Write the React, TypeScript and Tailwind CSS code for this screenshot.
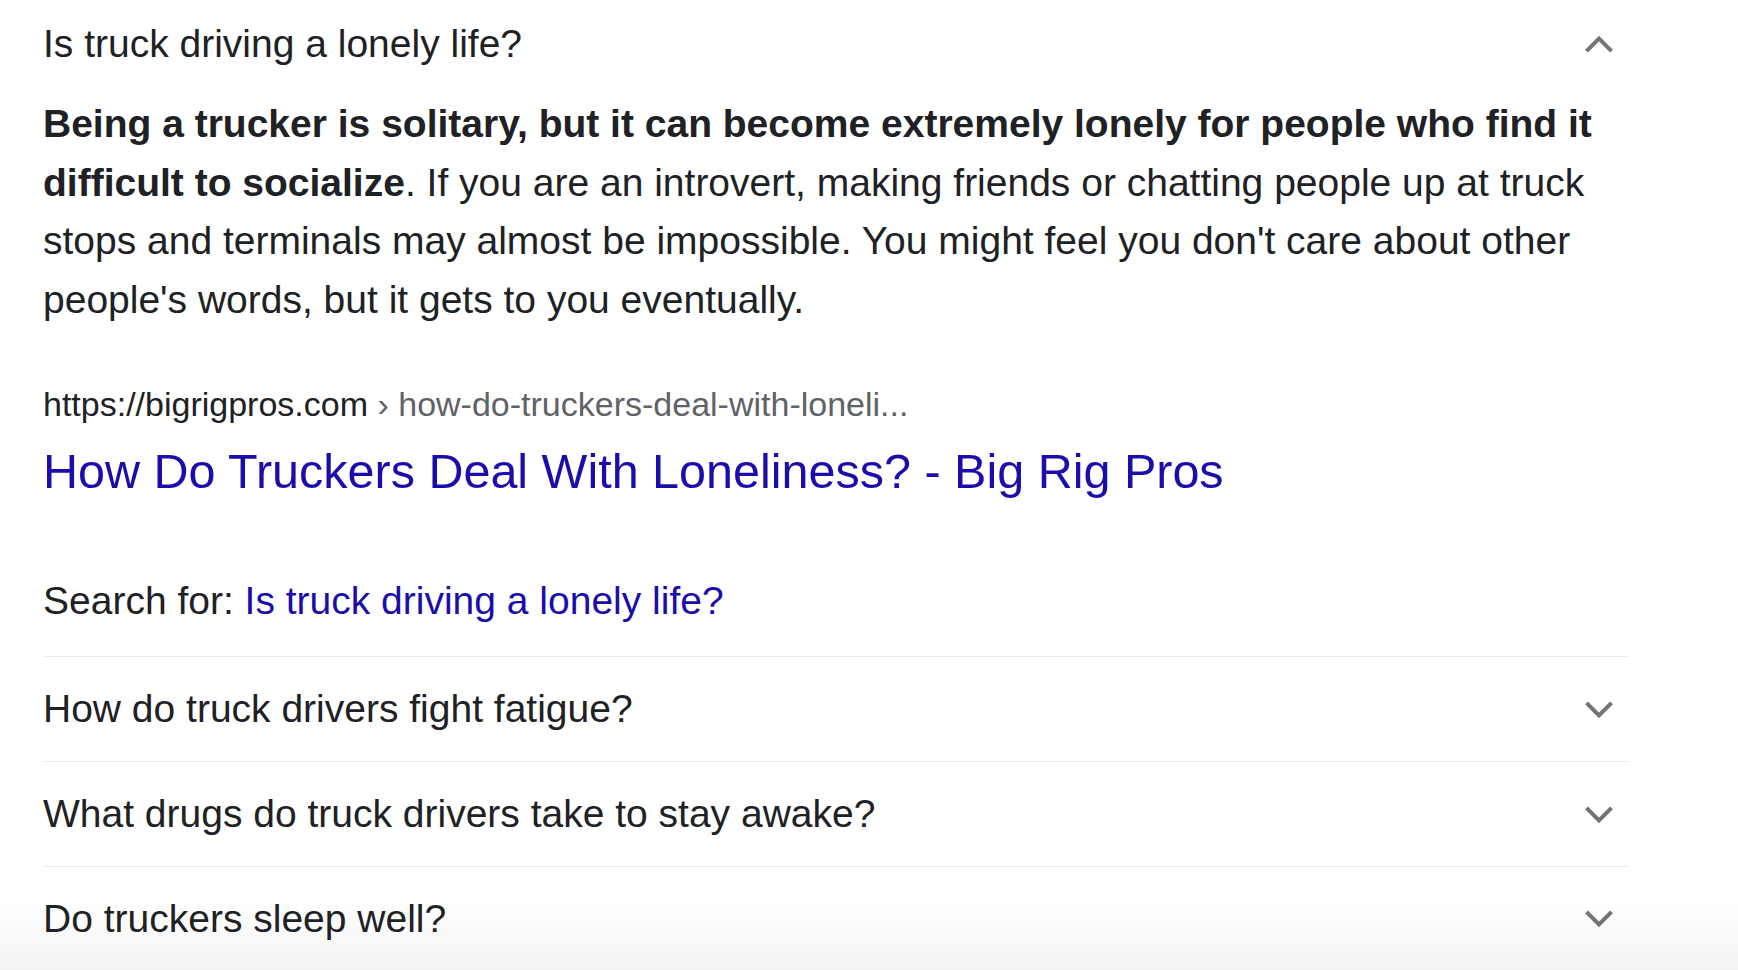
import React from 'react';

const font = { fontFamily: '"Liberation Sans", Arial, Helvetica, sans-serif' };

function Chevron({ up = false }: { up?: boolean }) {
  return (
    <svg width="30" height="19" viewBox="0 0 30 19" className={up ? 'rotate-180' : ''}>
      <path d="M2.5 2.8 L15 15.3 L27.5 2.8" fill="none" stroke="#70757a" strokeWidth="4" />
    </svg>
  );
}

const related = [
  'How do truck drivers fight fatigue?',
  'What drugs do truck drivers take to stay awake?',
  'Do truckers sleep well?',
];

export default function App() {
  return (
    <div
      className="min-h-[970px] bg-[linear-gradient(to_bottom,#ffffff_93%,#f3f3f3)] text-[#202124]"
      style={font}
    >
      <div className="ml-[43px] w-[1586px]">
        {/* expanded question */}
        <div className="flex h-[88px] items-center justify-between pr-[15px]">
          <span className="text-[39px]">Is truck driving a lonely life?</span>
          <Chevron up />
        </div>

        <p className="mt-[7px] text-[39px] leading-[58.6px]">
          <b>
            Being a trucker is solitary, but it can become extremely lonely for people who find it
            difficult to socialize
          </b>
          . If you are an introvert, making friends or chatting people up at truck stops and
          terminals may almost be impossible. You might feel you don't care about other people's
          words, but it gets to you eventually.
        </p>

        <div className="mt-[53px] text-[34px] leading-[44px]">
          <span>https://bigrigpros.com</span>
          <span className="text-[#5f6368]"> › how-do-truckers-deal-with-loneli...</span>
        </div>
        <a className="mt-[12px] block text-[48.5px] leading-[66px] text-[#1a0dab]">
          How Do Truckers Deal With Loneliness? - Big Rig Pros
        </a>

        <div className="mt-[68px] pb-[26px] text-[39px] leading-[58px]">
          Search for: <a className="text-[#1a0dab]">Is truck driving a lonely life?</a>
        </div>

        {/* collapsed questions */}
        {related.map((q) => (
          <div
            key={q}
            className="flex h-[105px] items-center justify-between border-t border-[#ebebeb] pr-[15px] last:border-b"
          >
            <span className="text-[39px]">{q}</span>
            <Chevron />
          </div>
        ))}
      </div>
    </div>
  );
}
